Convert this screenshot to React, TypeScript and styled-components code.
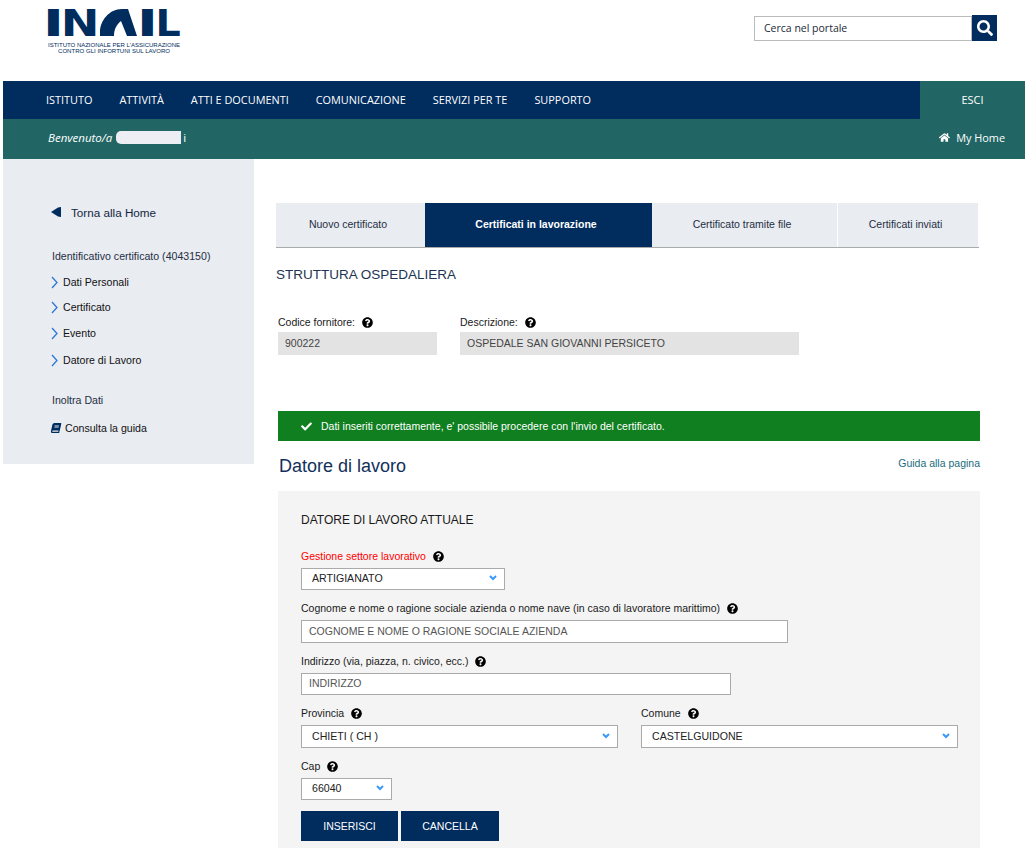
import React from 'react';
import styled, { createGlobalStyle } from 'styled-components';
import { FaBook, FaCheck, FaHome, FaQuestionCircle, FaSearch } from 'react-icons/fa';

const NAVY = '#002c5e';
const TEAL = '#216664';

const GlobalStyle = createGlobalStyle`
  html, body {
    margin: 0;
    padding: 0;
    background: #fff;
    overflow: hidden;
  }
  body {
    font-family: "Liberation Sans", Arial, sans-serif;
    font-size: 12px;
    color: #1a1a1a;
  }
`;

const Page = styled.div`
  width: 1022px;
  height: 848px;
  margin-left: 3px;
  overflow: hidden;
`;

const TopBar = styled.header`
  height: 81px;
  display: flex;
  justify-content: space-between;
  align-items: flex-start;
  padding-right: 28px;
`;

const LogoSvg = styled.svg`
  display: block;
  margin-left: 40px;
  margin-top: 6px;
  overflow: visible;
`;

const SearchForm = styled.div`
  display: flex;
  align-items: center;
  margin-top: 15px;
`;

const SearchInput = styled.div`
  box-sizing: border-box;
  width: 218px;
  height: 25px;
  border: 1px solid #bbb;
  padding-left: 9px;
  font: 10.5px/22px "Open Sans", sans-serif;
  color: #1b2a3a;
`;

const SearchButton = styled.button`
  width: 25px;
  height: 26px;
  border: 0;
  padding: 0;
  background: ${NAVY};
  color: #fff;
  display: flex;
  align-items: center;
  justify-content: center;
  font-size: 16px;
`;

const NavBar = styled.nav`
  height: 38px;
  background: ${NAVY};
  display: flex;
  align-items: center;
  justify-content: space-between;
  font-family: "Open Sans", sans-serif;
  font-size: 10.9px;
  color: #fff;
`;

const NavList = styled.div`
  display: flex;
  gap: 27px;
  padding: 0 0 2px 43px;
`;

const NavItem = styled.span`
  white-space: nowrap;
`;

const LogoutCell = styled.div`
  box-sizing: border-box;
  width: 105px;
  height: 100%;
  padding-bottom: 2px;
  background: ${TEAL};
  display: flex;
  align-items: center;
  justify-content: center;
`;

const UserBar = styled.div`
  box-sizing: border-box;
  height: 40px;
  background: ${TEAL};
  display: flex;
  align-items: center;
  justify-content: space-between;
  padding: 0 20px 4px 45px;
  font-family: "Open Sans", sans-serif;
  font-size: 10.9px;
  color: #fff;
`;

const Welcome = styled.span`
  display: flex;
  align-items: center;
  font-style: italic;
  font-size: 11.5px;
`;

const Redacted = styled.span`
  display: inline-block;
  width: 65px;
  height: 13px;
  margin-left: 4px;
  background: #eceef3;
  border-radius: 5px 0 0 5px;
`;

const NameTail = styled.span`
  font-style: normal;
  margin-left: 2px;
`;

const HomeLink = styled.span`
  display: flex;
  align-items: center;
  gap: 6px;
`;

const Body = styled.div`
  display: flex;
  align-items: flex-start;
`;

const Sidebar = styled.aside`
  box-sizing: border-box;
  width: 251px;
  height: 305px;
  flex: none;
  background: #e9ecf1;
  padding: 46px 0 0 48px;
  font-size: 10.6px;
`;

const BackLink = styled.div`
  display: flex;
  align-items: center;
  gap: 10px;
  height: 14px;
  font-size: 11.7px;
  color: #12263f;
  margin-bottom: 30px;
`;

const SideTitle = styled.div<{ $gap: number }>`
  height: 14px;
  line-height: 14px;
  padding-left: 1px;
  color: #1f2f44;
  margin-bottom: ${(p) => p.$gap}px;
`;

const SideLink = styled.div<{ $gap: number }>`
  display: flex;
  align-items: center;
  gap: 5px;
  height: 14px;
  line-height: 14px;
  color: #111;
  margin-bottom: ${(p) => p.$gap}px;
`;

const SideAction = styled.div`
  display: flex;
  align-items: center;
  gap: 4px;
  height: 14px;
  line-height: 14px;
  color: #111;
  svg {
    color: ${NAVY};
    font-size: 10px;
    transform: skewX(-12deg);
  }
`;

const Main = styled.main`
  flex: none;
  width: 704px;
  margin-left: 22px;
  padding-top: 44px;
`;

const Tabs = styled.div`
  display: flex;
  width: 703px;
  height: 45px;
  box-sizing: border-box;
  border-bottom: 1px solid #aaa;
`;

const Tab = styled.div<{ $width: number; $active?: boolean; $divided?: boolean }>`
  box-sizing: border-box;
  width: ${(p) => p.$width}px;
  flex: none;
  display: flex;
  align-items: center;
  justify-content: center;
  padding: 0 5px 2px 0;
  font-size: 10.5px;
  background: ${(p) => (p.$active ? NAVY : '#e9ecf1')};
  color: ${(p) => (p.$active ? '#fff' : '#1f2f44')};
  font-weight: ${(p) => (p.$active ? 700 : 400)};
  margin-right: ${(p) => (p.$divided ? 1 : 0)}px;
`;

const SectionTitle = styled.h2`
  margin: 19px 0 0;
  font-size: 13.5px;
  font-weight: 400;
  line-height: 16px;
  color: #1d3552;
`;

const SupplierRow = styled.div`
  display: flex;
  gap: 23px;
  margin: 32px 0 0 2px;
`;

const Label = styled.label<{ $required?: boolean }>`
  display: flex;
  align-items: center;
  gap: 7px;
  height: 14px;
  font-size: 10.5px;
  color: ${(p) => (p.$required ? '#f00' : '#1a1a1a')};
  white-space: nowrap;
  svg {
    color: #000;
    font-size: 11px;
  }
`;

const ReadOnlyBox = styled.div<{ $width: number }>`
  box-sizing: border-box;
  width: ${(p) => p.$width}px;
  height: 23px;
  margin-top: 3px;
  padding-left: 7px;
  background: #e3e3e3;
  color: #444;
  font-size: 10.5px;
  line-height: 23px;
`;

const SuccessAlert = styled.div`
  display: flex;
  align-items: center;
  gap: 9px;
  height: 30px;
  width: 702px;
  margin: 56px 0 0 2px;
  padding-left: 23px;
  box-sizing: border-box;
  background: #0f7f1f;
  color: #fff;
  font-size: 10.5px;
  svg {
    font-size: 11px;
  }
`;

const TitleRow = styled.div`
  display: flex;
  justify-content: space-between;
  align-items: flex-start;
  width: 702px;
  height: 50px;
  margin-left: 2px;
`;

const PageTitle = styled.h1`
  margin: 14px 0 0 1px;
  font-size: 18px;
  font-weight: 400;
  line-height: 22px;
  color: #12305a;
`;

const GuideLink = styled.a`
  margin-top: 15px;
  font-size: 10.5px;
  line-height: 14px;
  color: #1a6d7c;
`;

const Panel = styled.section`
  box-sizing: border-box;
  width: 702px;
  height: 357px;
  margin-left: 2px;
  padding: 22px 23px 0;
  background: #f4f4f4;
`;

const PanelTitle = styled.h3`
  margin: 0 0 22px;
  font-size: 12px;
  font-weight: 400;
  line-height: 14px;
  color: #1a1a1a;
`;

const Field = styled.div`
  margin-bottom: 11px;
`;

const FieldRow = styled.div`
  display: flex;
  gap: 23px;
`;

const TextInput = styled.input<{ $width: number; $height: number }>`
  display: block;
  box-sizing: border-box;
  width: ${(p) => p.$width}px;
  height: ${(p) => p.$height}px;
  margin-top: 5px;
  padding: 0 7px 2px;
  border: 1px solid #aaa;
  border-radius: 0;
  outline: 0;
  background: #fff;
  color: #555;
  font: 10.5px "Liberation Sans", Arial, sans-serif;
`;

const SelectBox = styled.div<{ $width: number; $height: number }>`
  display: flex;
  align-items: center;
  justify-content: space-between;
  box-sizing: border-box;
  width: ${(p) => p.$width}px;
  height: ${(p) => p.$height}px;
  margin-top: 5px;
  padding: 0 7px 2px 10px;
  border: 1px solid #aaa;
  background: #fff;
  color: #222;
  font-size: 10.6px;
`;

const Buttons = styled.div`
  display: flex;
  gap: 3px;
`;

const ActionButton = styled.button<{ $width: number }>`
  width: ${(p) => p.$width}px;
  height: 30px;
  border: 0;
  padding: 0;
  background: ${NAVY};
  color: #fff;
  font: 10.5px "Liberation Sans", Arial, sans-serif;
`;

const Help = () => <FaQuestionCircle />;

const Chevron = () => (
  <svg width="7" height="13" viewBox="0 0 7 13" fill="none" stroke="#2a78d6" strokeWidth="1.3">
    <polyline points="1,1 6,6.5 1,12" />
  </svg>
);

const SelectArrow = () => (
  <svg width="8" height="6" viewBox="0 0 8 6" fill="none" stroke="#3b99fc" strokeWidth="2">
    <polyline points="1,1 4,4 7,1" />
  </svg>
);

const BackArrow = () => (
  <svg width="10" height="10" viewBox="0 0 10 10" fill={NAVY}>
    <polygon points="0,5 7,0.5 10,0 10,10 7,9.5" />
  </svg>
);

// the logo's letters stay <text>, stretched per letter; only the swoosh A is a shape
const LogoLetter = ({ x, sx, children }: { x: number; sx: number; children: string }) => (
  <text
    transform={`translate(${x} 30) scale(${sx} 1)`}
    fontFamily='"DejaVu Sans", sans-serif'
    fontWeight="700"
    fontSize="37"
    fill={NAVY}
  >
    {children}
  </text>
);

const Logo = () => (
  <LogoSvg width="140" height="50" viewBox="0 0 140 50">
    <LogoLetter x={-0.2} sx={1.55}>I</LogoLetter>
    <LogoLetter x={17.8} sx={1.25}>N</LogoLetter>
    <path d="M79 3 C66 3 57 15 57 26 L57 30 L71 30 C71 24 73 19 78 15 L84 30 L94 30 L85 3 Z" fill={NAVY} />
    <LogoLetter x={93.8} sx={1.55}>I</LogoLetter>
    <LogoLetter x={112.4} sx={1.07}>L</LogoLetter>
    <text x="71" y="41" textAnchor="middle" fontFamily='"Liberation Sans", sans-serif' fontSize="6" fill={NAVY} textLength="132" lengthAdjust="spacingAndGlyphs">
      ISTITUTO NAZIONALE PER L'ASSICURAZIONE
    </text>
    <text x="71" y="47" textAnchor="middle" fontFamily='"Liberation Sans", sans-serif' fontSize="6" fill={NAVY} textLength="112" lengthAdjust="spacingAndGlyphs">
      CONTRO GLI INFORTUNI SUL LAVORO
    </text>
  </LogoSvg>
);

const NAV_ITEMS = ['ISTITUTO', 'ATTIVITÀ', 'ATTI E DOCUMENTI', 'COMUNICAZIONE', 'SERVIZI PER TE', 'SUPPORTO'];

const App: React.FC = () => {
  return (
    <Page>
      <GlobalStyle />
      <TopBar>
        <Logo />
        <SearchForm>
          <SearchInput>Cerca nel portale</SearchInput>
          <SearchButton>
            <FaSearch />
          </SearchButton>
        </SearchForm>
      </TopBar>

      <NavBar>
        <NavList>
          {NAV_ITEMS.map((item) => (
            <NavItem key={item}>{item}</NavItem>
          ))}
        </NavList>
        <LogoutCell>ESCI</LogoutCell>
      </NavBar>

      <UserBar>
        <Welcome>
          Benvenuto/a
          <Redacted />
          <NameTail>i</NameTail>
        </Welcome>
        <HomeLink>
          <FaHome />
          My Home
        </HomeLink>
      </UserBar>

      <Body>
        <Sidebar>
          <BackLink>
            <BackArrow />
            Torna alla Home
          </BackLink>
          <SideTitle $gap={12}>Identificativo certificato (4043150)</SideTitle>
          <SideLink $gap={11}>
            <Chevron />
            Dati Personali
          </SideLink>
          <SideLink $gap={12}>
            <Chevron />
            Certificato
          </SideLink>
          <SideLink $gap={13}>
            <Chevron />
            Evento
          </SideLink>
          <SideLink $gap={26}>
            <Chevron />
            Datore di Lavoro
          </SideLink>
          <SideTitle $gap={14}>Inoltra Dati</SideTitle>
          <SideAction>
            <FaBook />
            Consulta la guida
          </SideAction>
        </Sidebar>

        <Main>
          <Tabs>
            <Tab $width={149}>Nuovo certificato</Tab>
            <Tab $width={227} $active>
              Certificati in lavorazione
            </Tab>
            <Tab $width={185} $divided>
              Certificato tramite file
            </Tab>
            <Tab $width={140}>Certificati inviati</Tab>
          </Tabs>

          <SectionTitle>STRUTTURA OSPEDALIERA</SectionTitle>

          <SupplierRow>
            <div>
              <Label>
                Codice fornitore: <Help />
              </Label>
              <ReadOnlyBox $width={159}>900222</ReadOnlyBox>
            </div>
            <div>
              <Label>
                Descrizione: <Help />
              </Label>
              <ReadOnlyBox $width={339}>OSPEDALE SAN GIOVANNI PERSICETO</ReadOnlyBox>
            </div>
          </SupplierRow>

          <SuccessAlert>
            <FaCheck />
            Dati inseriti correttamente, e' possibile procedere con l'invio del certificato.
          </SuccessAlert>

          <TitleRow>
            <PageTitle>Datore di lavoro</PageTitle>
            <GuideLink>Guida alla pagina</GuideLink>
          </TitleRow>

          <Panel>
            <PanelTitle>DATORE DI LAVORO ATTUALE</PanelTitle>

            <Field>
              <Label $required>
                Gestione settore lavorativo <Help />
              </Label>
              <SelectBox $width={204} $height={22}>
                ARTIGIANATO
                <SelectArrow />
              </SelectBox>
            </Field>

            <Field>
              <Label>
                Cognome e nome o ragione sociale azienda o nome nave (in caso di lavoratore marittimo) <Help />
              </Label>
              <TextInput $width={487} $height={23} readOnly value="COGNOME E NOME O RAGIONE SOCIALE AZIENDA" />
            </Field>

            <Field>
              <Label>
                Indirizzo (via, piazza, n. civico, ecc.) <Help />
              </Label>
              <TextInput $width={430} $height={22} readOnly value="INDIRIZZO" />
            </Field>

            <FieldRow>
              <Field>
                <Label>
                  Provincia <Help />
                </Label>
                <SelectBox $width={317} $height={23}>
                  CHIETI ( CH )
                  <SelectArrow />
                </SelectBox>
              </Field>
              <Field>
                <Label>
                  Comune <Help />
                </Label>
                <SelectBox $width={317} $height={23}>
                  CASTELGUIDONE
                  <SelectArrow />
                </SelectBox>
              </Field>
            </FieldRow>

            <Field>
              <Label>
                Cap <Help />
              </Label>
              <SelectBox $width={91} $height={22}>
                66040
                <SelectArrow />
              </SelectBox>
            </Field>

            <Buttons>
              <ActionButton $width={97}>INSERISCI</ActionButton>
              <ActionButton $width={98}>CANCELLA</ActionButton>
            </Buttons>
          </Panel>
        </Main>
      </Body>
    </Page>
  );
};

export default App;
